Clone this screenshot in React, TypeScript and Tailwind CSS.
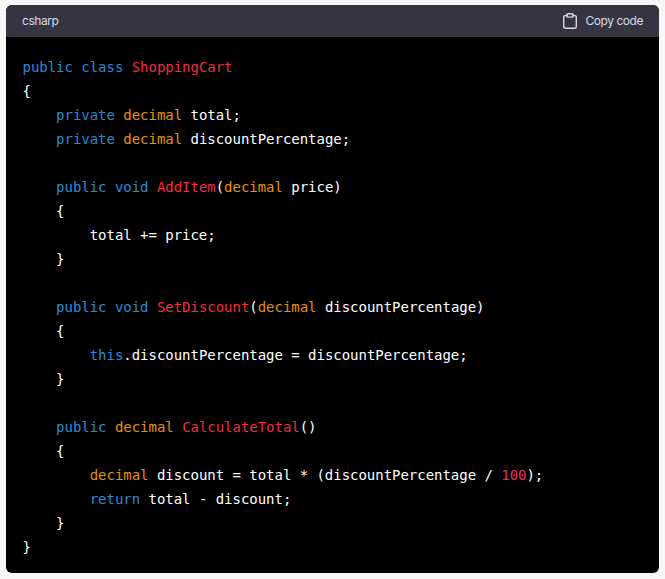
const KW = "text-[#2a8ad6]";
const TY = "text-[#e9900c]";
const FN = "text-[#f22c3d]";
const NUM = "text-[#e52e66]";

type Tok = [string, string?];

const LINES: Tok[][] = [
  [["public class", KW], [" "], ["ShoppingCart", FN]],
  [["{"]],
  [["    "], ["private", KW], [" "], ["decimal", TY], [" total;"]],
  [["    "], ["private", KW], [" "], ["decimal", TY], [" discountPercentage;"]],
  [],
  [["    "], ["public void", KW], [" "], ["AddItem", FN], ["("], ["decimal", TY], [" price)"]],
  [["    {"]],
  [["        total += price;"]],
  [["    }"]],
  [],
  [["    "], ["public void", KW], [" "], ["SetDiscount", FN], ["("], ["decimal", TY], [" discountPercentage)"]],
  [["    {"]],
  [["        "], ["this", KW], [".discountPercentage = discountPercentage;"]],
  [["    }"]],
  [],
  [["    "], ["public", KW], [" "], ["decimal", TY], [" "], ["CalculateTotal", FN], ["()"]],
  [["    {"]],
  [["        "], ["decimal", TY], [" discount = total * (discountPercentage / "], ["100", NUM], [");"]],
  [["        "], ["return", KW], [" total - discount;"]],
  [["    }"]],
  [["}"]],
];

function ClipboardIcon() {
  return (
    <svg width="14" height="16" viewBox="0 0 14 16" fill="none" stroke="currentColor" strokeWidth="1.4" strokeLinecap="round" strokeLinejoin="round">
      <path d="M4 2.5H2.7A2 2 0 0 0 .7 4.5v8.8a2 2 0 0 0 2 2h8.6a2 2 0 0 0 2-2V4.5a2 2 0 0 0-2-2H10" />
      <rect x="4" y="0.7" width="6" height="3.4" rx="0.8" />
    </svg>
  );
}

export default function App() {
  return (
    <div className="h-[579px] w-[665px] overflow-hidden bg-[#f7f7f8] px-[6px] pt-[5px]">
      <div className="h-[568px] overflow-hidden rounded-md bg-black">
        <div className="flex h-8 items-center justify-between bg-[#343541] px-4 font-['Inter',sans-serif] text-xs tracking-[-0.45px] text-[#d9d9e3]">
          <span>csharp</span>
          <button type="button" className="flex items-center gap-2">
            <ClipboardIcon />
            Copy code
          </button>
        </div>
        <pre className="pt-[18px] pl-[16.5px] font-['DejaVu_Sans_Mono',monospace] text-sm leading-6 tracking-[-0.03px] text-white">
          {LINES.map((line, i) => (
            <div key={i} className="h-6">
              {line.map(([text, tone], j) => (
                <span key={j} className={tone}>
                  {text}
                </span>
              ))}
            </div>
          ))}
        </pre>
      </div>
    </div>
  );
}
